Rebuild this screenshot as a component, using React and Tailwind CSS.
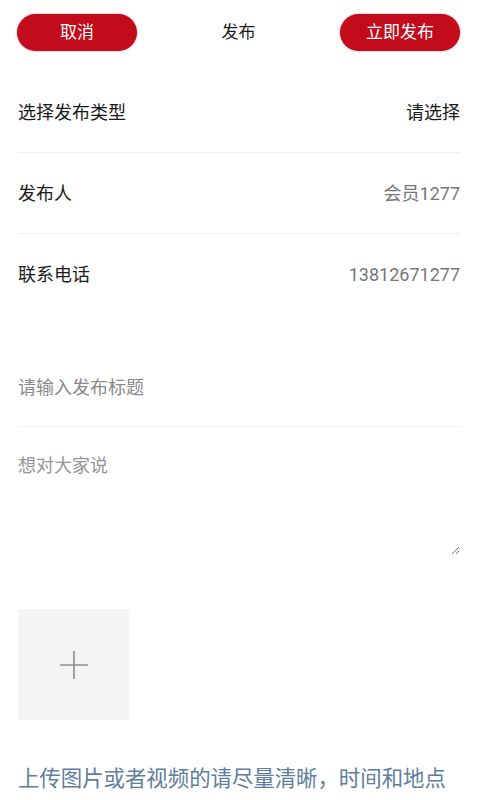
import { useState } from 'react';

const font = { fontFamily: 'Roboto, "Noto Sans CJK SC", sans-serif' };

const InfoRow = ({ label, value, valueClass }) => (
    <div className="h-[81px] flex items-center justify-between border-b border-[#eeeeee]">
        <span className="text-[18px] text-[#1a1a1a]">{label}</span>
        <span className={`text-[18px] ${valueClass}`}>{value}</span>
    </div>
);

const App = () => {
    const [title, setTitle] = useState('');
    const [content, setContent] = useState('');

    return (
        <div className="w-[480px] min-h-[800px] bg-white overflow-hidden" style={font}>
            <div className="h-[65px] px-[17px] pr-[20px] flex items-center justify-between">
                <button className="w-[120px] h-[37px] rounded-full bg-[#c20c1b] text-white text-[17px] shadow-[0_0_2px_rgba(194,12,27,0.5)]">
                    取消
                </button>
                <span className="text-[17px] text-[#1a1a1a]">发布</span>
                <button className="w-[120px] h-[37px] rounded-full bg-[#c20c1b] text-white text-[17px] shadow-[0_0_2px_rgba(194,12,27,0.5)]">
                    立即发布
                </button>
            </div>

            <div className="mt-[7px] pl-[18px] pr-[20px]">
                <InfoRow label="选择发布类型" value="请选择" valueClass="text-[#1a1a1a]" />
                <InfoRow label="发布人" value="会员1277" valueClass="text-[#777777]" />
                <div className="h-[81px] flex items-center justify-between">
                    <span className="text-[18px] text-[#1a1a1a]">联系电话</span>
                    <span className="text-[18px] text-[#777777]">13812671277</span>
                </div>

                <div className="mt-[33px] h-[79px] flex items-center border-b border-[#f2f2f2]">
                    <input
                        value={title}
                        onChange={(e) => setTitle(e.target.value)}
                        placeholder="请输入发布标题"
                        className="w-full text-[18px] text-[#1a1a1a] outline-none placeholder:text-[#8a8a8a]"
                    />
                </div>

                <textarea
                    value={content}
                    onChange={(e) => setContent(e.target.value)}
                    placeholder="想对大家说"
                    className="block w-full h-[128px] pt-[26px] text-[18px] leading-[26px] text-[#1a1a1a] outline-none placeholder:text-[#8a8a8a] opacity-90"
                />

                <div className="mt-[54px] w-[111px] h-[111px] bg-[#f4f4f4] flex items-center justify-center">
                    <svg width="30" height="30" viewBox="0 0 30 30">
                        <path d="M15 1v28M1 15h28" stroke="#8c8c8c" strokeWidth="1.6" />
                    </svg>
                </div>

                <p className="mt-[44px] text-[21.4px] leading-[30px] text-[#5e7d9c] whitespace-nowrap">
                    上传图片或者视频的请尽量清晰，时间和地点
                </p>
            </div>
        </div>
    );
};

export default App;
